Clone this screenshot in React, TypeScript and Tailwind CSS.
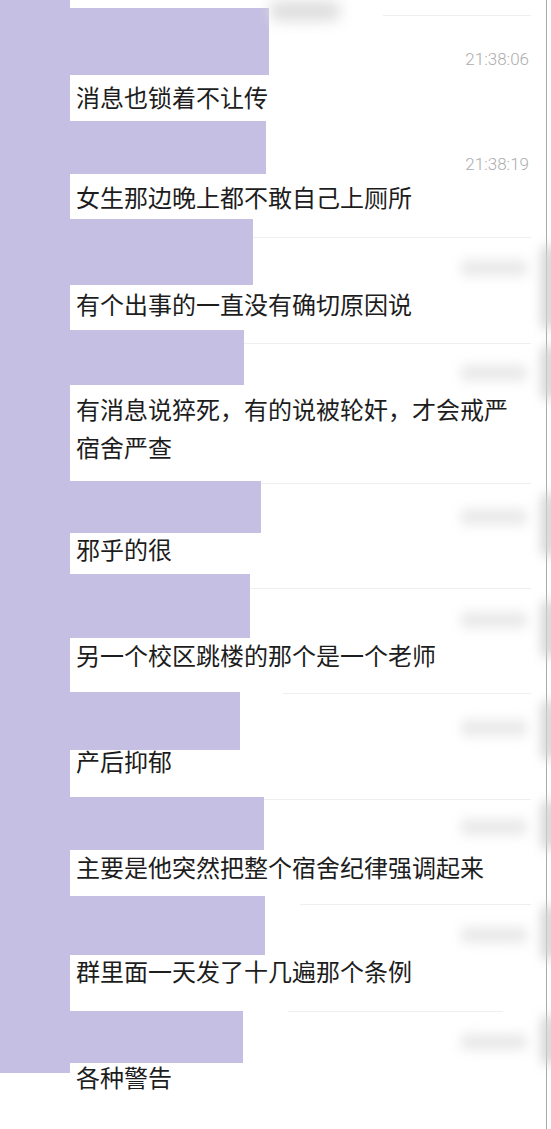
import React from 'react'

type Row = {
  nameW: string // 打码块宽度
  headH: string
  sepCls: string
  stamp?: string
  stampCls: string
  edgeCls?: string
  text: string
  bodyH: string
  textCls: string
}

const rows: Row[] = [
  {
    nameW: 'w-[199px]', headH: 'h-[67px]', sepCls: 'mt-[7px] ml-[114px]',
    stamp: '21:38:06', stampCls: 'mt-[33px]',
    text: '消息也锁着不让传', bodyH: 'h-[46px]', textCls: 'mt-[3px]',
  },
  {
    nameW: 'w-[196px]', headH: 'h-[53px]', sepCls: 'mt-[10px] ml-[1px]',
    stamp: '21:38:19', stampCls: 'mt-[23px]',
    text: '女生那边晚上都不敢自己上厕所', bodyH: 'h-[45px]', textCls: 'mt-[4px]',
  },
  {
    nameW: 'w-[183px]', headH: 'h-[66px]', sepCls: 'mt-[18px]',
    stampCls: 'mt-[22px]', edgeCls: 'top-[26px] h-[85px]',
    text: '有个出事的一直没有确切原因说', bodyH: 'h-[45px]', textCls: 'mt-0',
  },
  {
    nameW: 'w-[174px]', headH: 'h-[55px]', sepCls: 'mt-[13px]',
    stampCls: 'mt-[21px]', edgeCls: 'top-[15px] h-[55px]',
    text: '有消息说猝死，有的说被轮奸，才会戒严宿舍严查', bodyH: 'h-[96px]', textCls: 'mt-[5px] w-[440px]',
  },
  {
    nameW: 'w-[191px]', headH: 'h-[52px]', sepCls: 'mt-[2px]',
    stampCls: 'mt-[25px]', edgeCls: 'top-[12px] h-[64px]',
    text: '邪乎的很', bodyH: 'h-[41px]', textCls: '-mt-[3px]',
  },
  {
    nameW: 'w-[180px]', headH: 'h-[64px]', sepCls: 'mt-[14px]',
    stampCls: 'mt-[23px]', edgeCls: 'top-[26px] h-[58px]',
    text: '另一个校区跳楼的那个是一个老师', bodyH: 'h-[54px]', textCls: '-mt-[2px]',
  },
  {
    nameW: 'w-[170px]', headH: 'h-[58px]', sepCls: 'mt-[1px] ml-[43px]',
    stampCls: 'mt-[26px]', edgeCls: 'top-[8px] h-[60px]',
    text: '产后抑郁', bodyH: 'h-[47px]', textCls: '-mt-[8px]',
  },
  {
    nameW: 'w-[194px]', headH: 'h-[53px]', sepCls: 'mt-[2px]',
    stampCls: 'mt-[19px]', edgeCls: 'top-[3px] h-[50px]',
    text: '主要是他突然把整个宿舍纪律强调起来', bodyH: 'h-[46px]', textCls: '-mt-[2px]',
  },
  {
    nameW: 'w-[195px]', headH: 'h-[59px]', sepCls: 'mt-[8px] ml-[35px]',
    stampCls: 'mt-[22px]', edgeCls: 'top-[9px] h-[55px]',
    text: '群里面一天发了十几遍那个条例', bodyH: 'h-[56px]', textCls: '-mt-[3px]',
  },
  {
    nameW: 'w-[173px]', headH: 'h-[52px]', sepCls: 'mt-0 ml-[45px] mr-[43px]',
    stampCls: 'mt-[22px]', edgeCls: 'top-[4px] h-[50px]',
    text: '各种警告', bodyH: 'h-[56px]', textCls: '-mt-[5px]',
  },
]

const ChatRow: React.FC<{ row: Row; first: boolean }> = ({ row, first }) => (
  <div className="flex flex-col">
    {/* 头像昵称打码区 + 时间 */}
    <div className={`flex ${row.headH}`}>
      <div className={`${row.nameW} shrink-0 bg-[#c6bfe4]`} />
      <div className="relative flex-1 flex flex-col">
        {first && (
          <div className="absolute left-0 -top-[7px] w-[72px] h-[20px] rounded-full bg-[#dedede] blur-[7px]" />
        )}
        <div className={`h-px bg-[#efefef] mr-[15px] ${row.sepCls}`} />
        {row.stamp ? (
          <div
            className={`text-right pr-[17px] text-[17px] leading-[20px] font-light text-[#adadad] ${row.stampCls}`}
            style={{ fontFamily: 'Roboto, "Noto Sans", sans-serif' }}
          >
            {row.stamp}
          </div>
        ) : (
          <div className={`self-end mr-[19px] w-[66px] h-[16px] rounded bg-[#e9e9e9] blur-[6px] ${row.stampCls}`} />
        )}
        {row.edgeCls && (
          <div className={`absolute -right-[10px] w-[14px] rounded-full bg-[#d2d2d2] blur-[6px] ${row.edgeCls}`} />
        )}
      </div>
    </div>
    {/* 消息内容 */}
    <div className={`${row.bodyH} flex flex-col pl-[6px]`}>
      <p className={`text-[24px] leading-[38px] text-[#1d1d1d] ${row.textCls}`}>{row.text}</p>
    </div>
  </div>
)

export default function App() {
  return (
    <div
      className="w-[551px] h-[1129px] bg-white overflow-hidden flex"
      style={{ fontFamily: '"Noto Sans CJK SC", "Noto Sans", sans-serif' }}
    >
      <div className="w-[70px] h-[1073px] shrink-0 bg-[#c6bfe4]" />
      <div className="w-[477px] h-full border-r border-[#a8a8a8] pt-[8px]">
        {rows.map((row, i) => (
          <ChatRow key={i} row={row} first={i === 0} />
        ))}
      </div>
    </div>
  )
}
